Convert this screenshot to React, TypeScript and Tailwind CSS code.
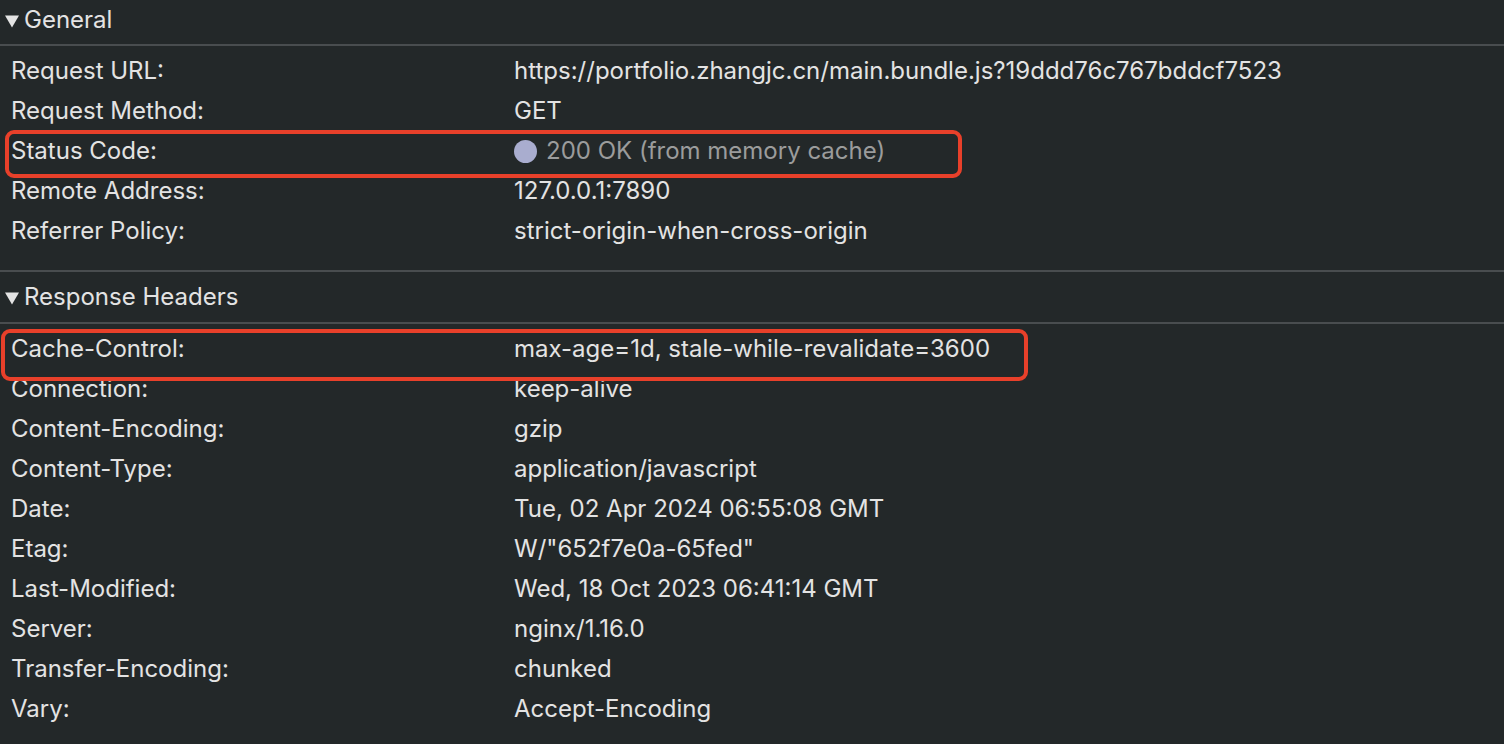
import React from "react";

const general: [string, React.ReactNode][] = [
  ["Request URL:", "https://portfolio.zhangjc.cn/main.bundle.js?19ddd76c767bddcf7523"],
  ["Request Method:", "GET"],
  ["Status Code:", "status"],
  ["Remote Address:", "127.0.0.1:7890"],
  ["Referrer Policy:", "strict-origin-when-cross-origin"],
];

const response: [string, string][] = [
  ["Cache-Control:", "max-age=1d, stale-while-revalidate=3600"],
  ["Connection:", "keep-alive"],
  ["Content-Encoding:", "gzip"],
  ["Content-Type:", "application/javascript"],
  ["Date:", "Tue, 02 Apr 2024 06:55:08 GMT"],
  ["Etag:", 'W/"652f7e0a-65fed"'],
  ["Last-Modified:", "Wed, 18 Oct 2023 06:41:14 GMT"],
  ["Server:", "nginx/1.16.0"],
  ["Transfer-Encoding:", "chunked"],
  ["Vary:", "Accept-Encoding"],
];

function Triangle() {
  return (
    <svg width="14" height="13" viewBox="0 0 14 13" className="mr-[5px] mt-[2px] shrink-0">
      <polygon points="0,0.5 14,0.5 7,12.5" fill="#e3e3e3" />
    </svg>
  );
}

function Row({ name, value }: { name: string; value: React.ReactNode }) {
  return (
    <div className="flex h-[40px] items-center">
      <div className="w-[514px] pl-[11px] shrink-0">{name}</div>
      <div className="whitespace-nowrap">{value}</div>
    </div>
  );
}

export default function App() {
  return (
    <div
      className="relative h-[744px] w-[1504px] overflow-hidden bg-[#232829] text-[24px] text-[#e3e3e3]"
      style={{ fontFamily: "Inter, 'Noto Sans', sans-serif" }}
    >
      <div className="flex h-[44px] items-center pl-[5px] pb-[4px]">
        <Triangle />
        <span>General</span>
      </div>
      <div className="h-[2px] bg-[#494d4f]" />
      <div className="pt-[5px] pb-[19px]">
        {general.map(([n, v]) => (
          <Row
            key={n}
            name={n}
            value={
              v === "status" ? (
                <span className="flex items-center text-[#9b9c9c]">
                  <span className="mr-[9px] inline-block h-[23px] w-[23px] rounded-full bg-[#a9adcf]" />
                  200 OK (from memory cache)
                </span>
              ) : (
                v
              )
            }
          />
        ))}
      </div>
      <div className="h-[2px] bg-[#494d4f]" />
      <div className="flex h-[50px] items-center pl-[5px]">
        <Triangle />
        <span>Response Headers</span>
      </div>
      <div className="h-[2px] bg-[#494d4f]" />
      <div className="pt-[5px]">
        {response.map(([n, v]) => (
          <Row key={n} name={n} value={v} />
        ))}
      </div>

      <div className="pointer-events-none absolute left-[5px] top-[130px] h-[48px] w-[957px] rounded-[9px] border-[4px] border-[#e8402a]" />
      <div className="pointer-events-none absolute left-[1px] top-[329px] h-[52px] w-[1027px] rounded-[9px] border-[4px] border-[#e8402a]" />
    </div>
  );
}
